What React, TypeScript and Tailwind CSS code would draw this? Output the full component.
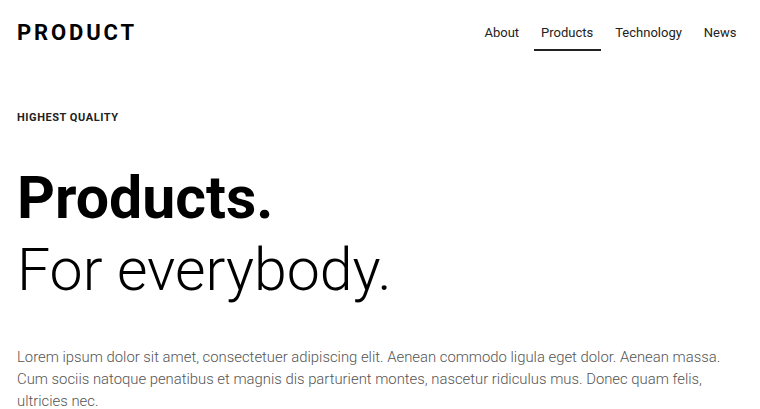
import React from "react";

export default function App() {
  return (
    <div className="w-[760px] h-[409px] overflow-hidden bg-white font-['Roboto',sans-serif]">
      <header className="flex items-center justify-between pl-[17px] pr-[16px] h-[66px]">
        <div className="text-[22px] font-bold tracking-[0.13em] text-black leading-none">PRODUCT</div>
        <nav className="flex items-center gap-[7px] text-[13px] leading-[18px] text-[#222]">
          <a className="px-[7.5px] pt-[8px] pb-[7px] border-b-2 border-transparent">About</a>
          <a className="px-[7.5px] pt-[8px] pb-[7px] border-b-2 border-[#222]">Products</a>
          <a className="px-[7.5px] pt-[8px] pb-[7px] border-b-2 border-transparent">Technology</a>
          <a className="px-[7.5px] pt-[8px] pb-[7px] border-b-2 border-transparent">News</a>
        </nav>
      </header>
      <main className="px-[17px]">
        <div className="mt-[44px] text-[11px] font-bold tracking-[0.05em] text-[#222]">HIGHEST QUALITY</div>
        <h1 className="mt-[35px] text-[59px] leading-[72px] text-black">
          <span className="block font-bold">Products.</span>
          <span className="block font-light">For everybody.</span>
        </h1>
        <p className="mt-[40px] text-[14.85px] leading-[22px] font-light text-[#555] max-w-[720px]">
          Lorem ipsum dolor sit amet, consectetuer adipiscing elit. Aenean commodo ligula eget dolor. Aenean massa. Cum sociis natoque penatibus et magnis dis parturient montes, nascetur ridiculus mus. Donec quam felis, ultricies nec.
        </p>
      </main>
    </div>
  );
}
